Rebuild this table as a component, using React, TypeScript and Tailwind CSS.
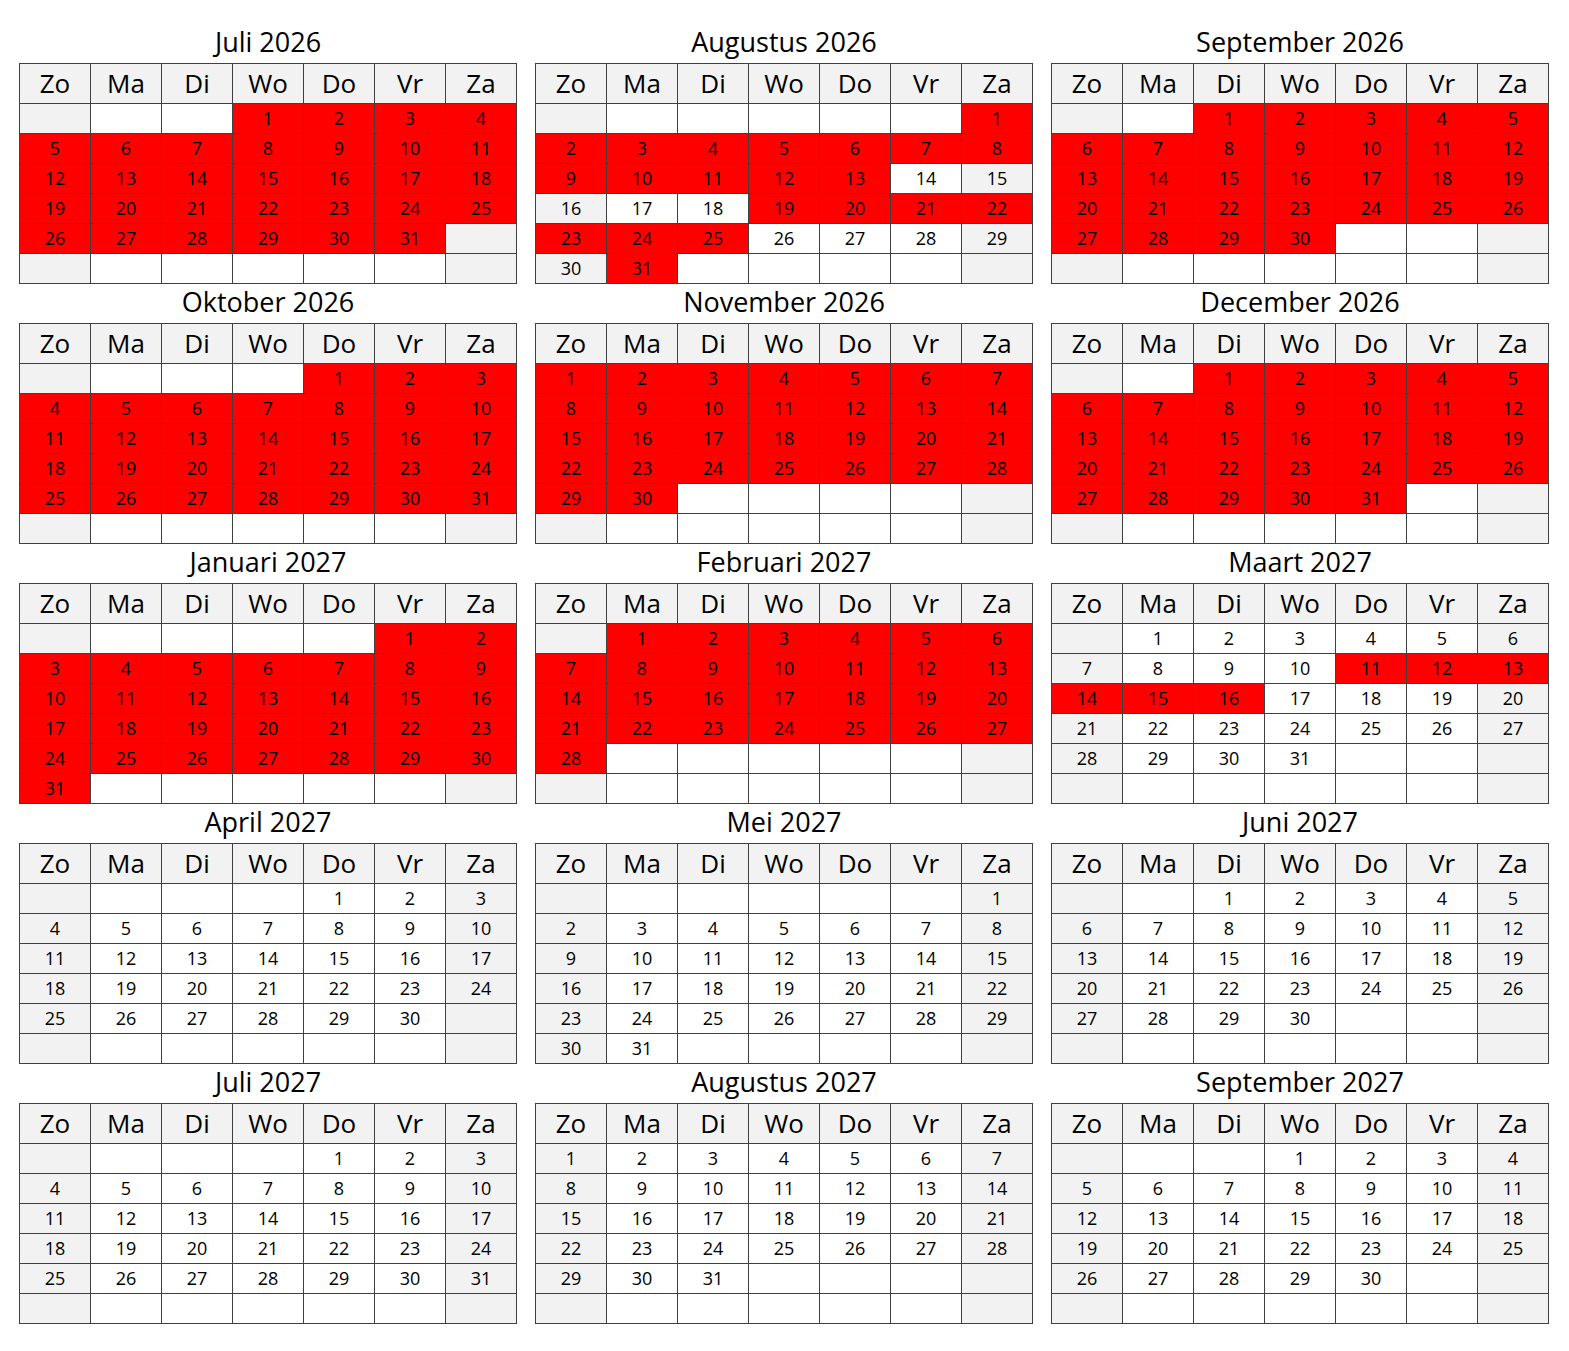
// ─── Calendar data ──────────────────────────────────────────────────────────

const MONTH_NAMES = [
	"Januari",
	"Februari",
	"Maart",
	"April",
	"Mei",
	"Juni",
	"Juli",
	"Augustus",
	"September",
	"Oktober",
	"November",
	"December",
] as const;

const DAY_NAMES = ["Zo", "Ma", "Di", "Wo", "Do", "Vr", "Za"] as const;

function range(from: number, to: number): number[] {
	const out: number[] = [];
	for (let i = from; i <= to; i++) out.push(i);
	return out;
}

// key: `${year}-${month}` with month 1-based
const BOOKED: Record<string, number[]> = {
	"2026-7": range(1, 31),
	"2026-8": [...range(1, 13), ...range(19, 25), 31],
	"2026-9": range(1, 30),
	"2026-10": range(1, 31),
	"2026-11": range(1, 30),
	"2026-12": range(1, 31),
	"2027-1": range(1, 31),
	"2027-2": range(1, 28),
	"2027-3": range(11, 16),
};

const MONTHS: { year: number; month: number }[] = [];
for (let i = 0; i < 15; i++) {
	const m = 6 + i; // July 2026 = index 6
	MONTHS.push({ year: 2026 + Math.floor(m / 12), month: (m % 12) + 1 });
}

// ─── Month table ────────────────────────────────────────────────────────────

function MonthTable({ year, month }: { year: number; month: number }) {
	const firstDow = new Date(year, month - 1, 1).getDay();
	const daysInMonth = new Date(year, month, 0).getDate();
	const booked = new Set(BOOKED[`${year}-${month}`] ?? []);

	const cells = range(0, 41).map((i) => {
		const col = i % 7;
		const day = i - firstDow + 1;
		const valid = day >= 1 && day <= daysInMonth;
		const weekend = col === 0 || col === 6;
		let bg = weekend ? "bg-[#f2f2f2]" : "bg-white";
		if (valid && booked.has(day)) bg = "bg-[#ff0000]";
		return (
			<div
				key={`cell-${i.toString()}`}
				className={`flex h-[30px] items-center justify-center border-r border-b border-[#404040] pb-[2px] text-[18px] leading-none ${bg}`}
			>
				{valid ? day : ""}
			</div>
		);
	});

	return (
		<div className="flex flex-col">
			<div className="flex h-[39px] items-center justify-center pb-[4px] text-[27px] leading-none">
				{MONTH_NAMES[month - 1]} {year}
			</div>
			<div className="grid w-[498px] grid-cols-7 border-t border-l border-[#404040]">
				{DAY_NAMES.map((d) => (
					<div
						key={d}
						className="flex h-[40px] items-center justify-center border-r border-b border-[#404040] bg-[#f2f2f2] pb-[2px] text-[26px] leading-none"
					>
						{d}
					</div>
				))}
				{cells}
			</div>
		</div>
	);
}

// ─── Page ───────────────────────────────────────────────────────────────────

export default function App() {
	return (
		<div className="min-h-[1351px] bg-white pt-[24px] pl-[19px] font-['Open_Sans',sans-serif] text-black">
			<div className="grid grid-cols-[498px_498px_498px] gap-x-[18px]">
				{MONTHS.map((m) => (
					<MonthTable key={`${m.year}-${m.month}`} year={m.year} month={m.month} />
				))}
			</div>
		</div>
	);
}
